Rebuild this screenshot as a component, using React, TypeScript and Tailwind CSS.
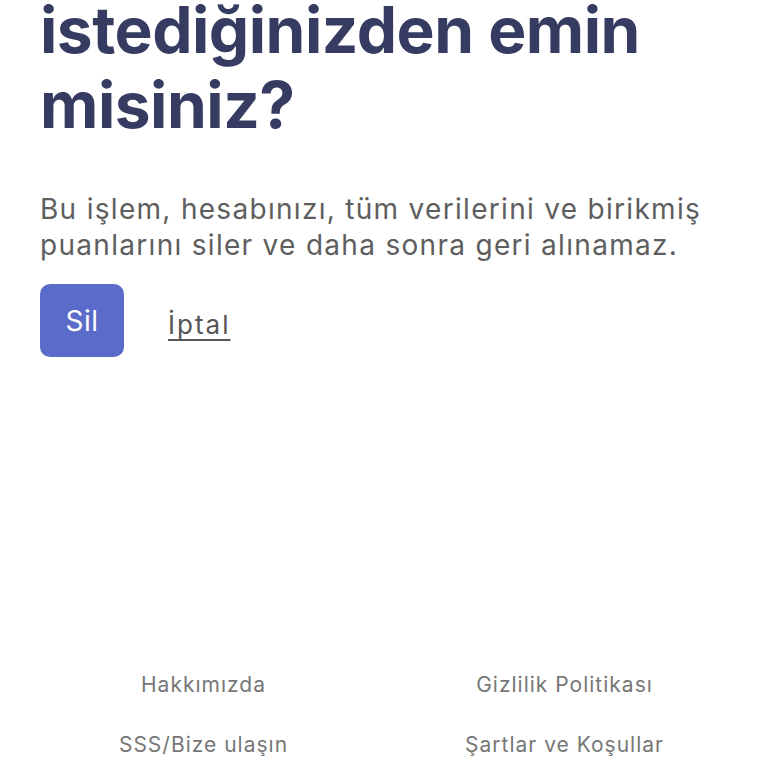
export default function App() {
  return (
    <div className="min-h-[768px] w-[768px] overflow-hidden bg-white font-['Inter','Noto_Sans',sans-serif] flex flex-col">
      <div className="px-10">
        <h1 className="-mt-2 text-[64px] leading-[75px] font-bold tracking-[-0.5px] text-[#363c61]">
          istediğinizden emin misiniz?
        </h1>
        <p className="mt-[49px] text-[28px] leading-[36px] tracking-[1.3px] text-[#5e5e5e]">
          Bu işlem, hesabınızı, tüm verilerini ve birikmiş puanlarını siler ve daha sonra geri alınamaz.
        </p>
        <div className="mt-[21px] flex items-start gap-[44px]">
          <button className="w-[84px] h-[73px] rounded-[10px] bg-[#5b6bc9] text-white text-[28px] tracking-[0.5px]">Sil</button>
          <a href="#" className="mt-[24px] text-[26px] leading-[34px] tracking-[2px] text-[#555] underline underline-offset-[5px] decoration-[1.5px]">İptal</a>
        </div>
      </div>
      <div className="mt-auto px-[23px] pb-[9px] grid grid-cols-2 gap-y-[32px] text-[21px] leading-[28px] tracking-[1px] text-[#777] text-center">
        <a href="#">Hakkımızda</a>
        <a href="#">Gizlilik Politikası</a>
        <a href="#">SSS/Bize ulaşın</a>
        <a href="#">Şartlar ve Koşullar</a>
      </div>
    </div>
  );
}
